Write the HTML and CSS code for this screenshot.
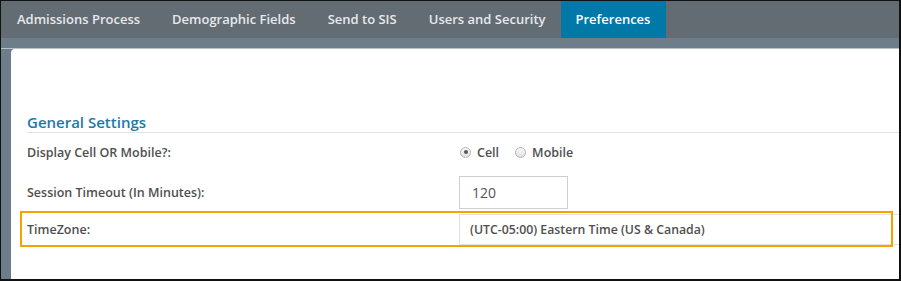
FILE: index.html
```html
<!DOCTYPE html>
<html lang="en">
<head>
    <meta charset="UTF-8">
    <title>Preferences</title>
    <link rel="stylesheet" href="styles.css">
</head>
<body>
    <div class="navbar">
        <div class="tab">Admissions Process</div>
        <div class="tab">Demographic Fields</div>
        <div class="tab">Send to SIS</div>
        <div class="tab">Users and Security</div>
        <div class="tab active">Preferences</div>
    </div>
    <div class="strip"></div>
    <div class="main">
        <div class="panel">
            <h2 class="section-title">General Settings</h2>
            <div class="form-row row-display">
                <div class="label">Display Cell OR Mobile?:</div>
                <div class="value radios">
                    <label class="radio"><span class="dot checked"></span>Cell</label>
                    <label class="radio"><span class="dot"></span>Mobile</label>
                </div>
            </div>
            <div class="form-row row-timeout">
                <div class="label">Session Timeout (In Minutes):</div>
                <div class="value"><div class="textbox">120</div></div>
            </div>
            <div class="form-row row-timezone highlighted">
                <div class="label">TimeZone:</div>
                <div class="value"><div class="selectbox">(UTC-05:00) Eastern Time (US &amp; Canada)</div></div>
            </div>
        </div>
    </div>
</body>
</html>
```

FILE: styles.css
```css
html, body {
    margin: 0;
    height: 100%;
}

body {
    box-sizing: border-box;
    border: 1px solid #111;
    border-right-width: 2px;
    border-bottom-width: 2px;
    background: #6e7d8a;
    font-family: "Open Sans", Arial, sans-serif;
    font-weight: 600;
    overflow: hidden;
    display: flex;
    flex-direction: column;
}

.navbar {
    display: flex;
    height: 37px;
    background: #636b73;
}

.tab {
    padding: 0 16px;
    line-height: 37px;
    font-size: 13px;
    color: #e6e9ec;
}

.tab.active {
    padding: 0 16px 0 15px;
    margin-left: -1px;
    background: #0079a8;
    color: #fff;
}

.strip {
    height: 11px;
    border-bottom: 1px solid #b9c2ca;
    box-sizing: border-box;
}

.main {
    flex: 1;
    padding-left: 10px;
    display: flex;
}

.panel {
    flex: 1;
    background: #fff;
    border-top-left-radius: 4px;
    padding: 63px 0 0 16px;
}

.section-title {
    margin: 0;
    font-size: 15px;
    font-weight: 600;
    line-height: 20px;
    color: #1b79a8;
    border-bottom: 1px solid #e3e3e3;
}

.form-row {
    display: grid;
    grid-template-columns: 432px 1fr;
    align-items: center;
    font-size: 12.5px;
    color: #4f4f4f;
}

.row-display {
    height: 30px;
    margin-top: 4px;
}

.row-timeout {
    margin-top: 9px;
}

.row-timezone {
    margin-top: 5px;
}

.radios {
    display: flex;
    gap: 16px;
    padding-left: 1px;
}

.radio {
    display: flex;
    align-items: center;
    gap: 6px;
}

.dot {
    width: 11px;
    height: 11px;
    border-radius: 50%;
    border: 1px solid #b5b5b5;
    background: linear-gradient(#fafafa, #e0e0e0);
    box-sizing: border-box;
    position: relative;
}

.dot.checked::after {
    content: "";
    position: absolute;
    left: 2.5px;
    top: 2.5px;
    width: 4px;
    height: 4px;
    border-radius: 50%;
    background: #555;
}

.textbox {
    width: 109px;
    height: 33px;
    box-sizing: border-box;
    border: 1px solid #cfcfcf;
    padding-left: 12px;
    line-height: 31px;
    font-size: 14px;
    font-weight: 500;
    color: #555;
}

.selectbox {
    height: 31px;
    box-sizing: border-box;
    border: 1px solid #e2e2e2;
    border-right: none;
    padding-left: 10px;
    line-height: 29px;
    font-size: 12.3px;
}

.highlighted {
    position: relative;
}

.highlighted::after {
    content: "";
    position: absolute;
    left: -7px;
    right: 6px;
    top: -3px;
    bottom: -2px;
    border: 2px solid #f6a300;
}
```
